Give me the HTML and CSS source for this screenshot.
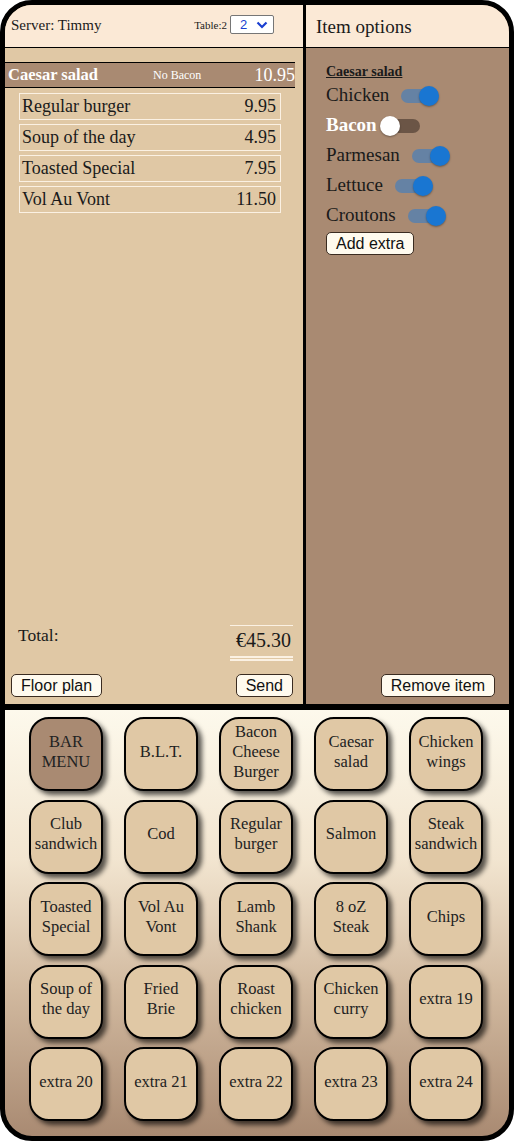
FILE: index.html
```html
<!DOCTYPE html>
<html>
  <head>
    <title>POS</title>
    <link rel="stylesheet" href="styles.css">
  </head>
  <body>
    <div class="pos">
      <div class="top">
        <div class="order-panel">
          <div class="panel-header">
            <span class="server">Server: Timmy</span>
            <span class="table-pick">
              Table:2
              <span class="table-select">2 <svg width="12" height="8" viewBox="0 0 12 8"><path d="M1.5 1.5 L6 6 L10.5 1.5" fill="none" stroke="#1a3fd1" stroke-width="2.2"/></svg></span>
            </span>
          </div>
          <div class="order-body">
            <div class="order-list">
              <div class="order-row selected">
                <span class="item-name">Caesar salad</span>
                <span class="item-note">No Bacon</span>
                <span class="item-price">10.95</span>
              </div>
              <div class="order-row">
                <span class="item-name">Regular burger</span>
                <span class="item-price">9.95</span>
              </div>
              <div class="order-row">
                <span class="item-name">Soup of the day</span>
                <span class="item-price">4.95</span>
              </div>
              <div class="order-row">
                <span class="item-name">Toasted Special</span>
                <span class="item-price">7.95</span>
              </div>
              <div class="order-row">
                <span class="item-name">Vol Au Vont</span>
                <span class="item-price">11.50</span>
              </div>
            </div>
            <div class="total">
              <span class="total-label">Total:</span>
              <span class="total-amount">€45.30</span>
            </div>
            <div class="actions">
              <button class="pos-button">Floor plan</button>
              <button class="pos-button">Send</button>
            </div>
          </div>
        </div>

        <div class="options-panel">
          <div class="panel-header">
            <span class="options-title">Item options</span>
          </div>
          <div class="options-body">
            <div class="options-list">
              <div class="options-item">Caesar salad</div>
              <div class="option">Chicken <span class="switch on"></span></div>
              <div class="option off">Bacon<span class="switch"></span></div>
              <div class="option">Parmesan <span class="switch on"></span></div>
              <div class="option">Lettuce <span class="switch on"></span></div>
              <div class="option">Croutons <span class="switch on"></span></div>
              <button class="pos-button">Add extra</button>
            </div>
            <div class="actions right">
              <button class="pos-button">Remove item</button>
            </div>
          </div>
        </div>
      </div>

      <div class="menu">
        <div class="menu-button bar">BAR<br>MENU</div>
        <div class="menu-button">B.L.T.</div>
        <div class="menu-button">Bacon Cheese Burger</div>
        <div class="menu-button">Caesar salad</div>
        <div class="menu-button">Chicken wings</div>
        <div class="menu-button">Club sandwich</div>
        <div class="menu-button">Cod</div>
        <div class="menu-button">Regular burger</div>
        <div class="menu-button">Salmon</div>
        <div class="menu-button">Steak sandwich</div>
        <div class="menu-button">Toasted Special</div>
        <div class="menu-button">Vol Au Vont</div>
        <div class="menu-button">Lamb Shank</div>
        <div class="menu-button">8 oZ Steak</div>
        <div class="menu-button">Chips</div>
        <div class="menu-button">Soup of the day</div>
        <div class="menu-button">Fried Brie</div>
        <div class="menu-button">Roast chicken</div>
        <div class="menu-button">Chicken curry</div>
        <div class="menu-button">extra 19</div>
        <div class="menu-button">extra 20</div>
        <div class="menu-button">extra 21</div>
        <div class="menu-button">extra 22</div>
        <div class="menu-button">extra 23</div>
        <div class="menu-button">extra 24</div>
      </div>
    </div>
  </body>
</html>
```

FILE: styles.css
```css
body {
  margin: 0;
  background-color: white;
  font-family: "Liberation Serif", "Times New Roman", serif;
  color: #1a1a1a;
}

.pos {
  box-sizing: border-box;
  width: 514px;
  height: 1141px;
  border: 5px solid black;
  border-radius: 32px;
  overflow: hidden;
  display: flex;
  flex-direction: column;
  background-color: black;
}

.top {
  display: flex;
  height: 699px;
  border-bottom: 6px solid black;
}

.order-panel {
  width: 298px;
  border-right: 3px solid black;
  display: flex;
  flex-direction: column;
  background-color: #e0c8a5;
}

.options-panel {
  flex: 1;
  display: flex;
  flex-direction: column;
  background-color: #a98a72;
}

.panel-header {
  box-sizing: border-box;
  height: 43px;
  border-bottom: 1px solid black;
  background-color: #fbe9d6;
  display: flex;
  align-items: center;
  justify-content: space-between;
  padding: 0 6px;
}

.server {
  font-size: 15px;
  margin-top: -1px;
}

.table-pick {
  font-size: 11px;
  display: flex;
  align-items: center;
  gap: 3px;
  margin-right: 23px;
  margin-top: -3px;
}

.table-select {
  box-sizing: border-box;
  width: 44px;
  height: 19px;
  border: 1px solid #767676;
  border-radius: 2px;
  background-color: white;
  color: #1a3fd1;
  font-family: "Liberation Sans", Arial, sans-serif;
  font-size: 13px;
  display: flex;
  align-items: center;
  justify-content: space-between;
  padding: 0 5px 0 9px;
}

.order-body {
  flex: 1;
  display: flex;
  flex-direction: column;
}

.order-list {
  flex: 1;
  padding-top: 14px;
  display: flex;
  flex-direction: column;
  gap: 4px;
}

.order-row {
  box-sizing: border-box;
  height: 27px;
  width: 262px;
  margin-left: 14px;
  border: 1px solid #fbf1e3;
  display: flex;
  align-items: center;
  justify-content: space-between;
  padding: 0 4px 0 2px;
  font-size: 18px;
}

.order-row.selected {
  width: 290px;
  height: 26px;
  margin-left: 0;
  margin-bottom: 1px;
  border: none;
  border-top: 1px solid black;
  border-bottom: 1px solid black;
  background-color: #a98a72;
  color: white;
  padding: 0 0 0 3px;
}

.selected .item-name {
  font-weight: bold;
  font-size: 16.5px;
  width: 130px;
}

.item-note {
  font-size: 12px;
  flex: 1;
  margin-left: 15px;
}

.total {
  display: flex;
  justify-content: space-between;
  align-items: flex-start;
  padding: 0 10px 0 13px;
}

.total-label {
  font-size: 17.5px;
  margin-top: 0;
}

.total-amount {
  font-size: 20px;
  border-top: 1px solid #fbf1e3;
  border-bottom: 5px double #fbf1e3;
  padding: 3px 2px 4px 2px;
  width: 59px;
  text-align: right;
}

.actions {
  display: flex;
  justify-content: space-between;
  padding: 13px 10px 7px 6px;
}

.actions.right {
  justify-content: flex-end;
  padding-right: 14px;
}

.pos-button {
  height: 23px;
  font-family: "Liberation Sans", Arial, sans-serif;
  font-size: 16px;
  color: #111;
  background-color: #fffaee;
  border: 1px solid #3a2b20;
  border-radius: 5px;
  padding: 0 9px;
  cursor: pointer;
}

.options-title {
  font-size: 19px;
  padding-left: 4px;
  margin-top: 1px;
}

.options-body {
  flex: 1;
  display: flex;
  flex-direction: column;
}

.options-list {
  flex: 1;
  padding: 16px 0 0 20px;
  display: flex;
  flex-direction: column;
  align-items: flex-start;
}

.options-item {
  font-size: 14px;
  font-weight: bold;
  text-decoration: underline;
  margin-bottom: 0;
}

.option {
  font-size: 19px;
  height: 30px;
  display: flex;
  align-items: center;
  gap: 5px;
}

.option.off {
  color: white;
  font-weight: bold;
  gap: 2px;
}

.switch {
  position: relative;
  width: 34px;
  height: 14px;
  border-radius: 7px;
  background-color: #6b5546;
  margin-left: 7px;
  margin-top: 2px;
}

.switch::after {
  content: "";
  position: absolute;
  top: -3px;
  left: -6px;
  width: 20px;
  height: 20px;
  border-radius: 50%;
  background-color: white;
  box-shadow: 0 1px 2px rgba(0, 0, 0, 0.35);
}

.switch.on {
  background-color: #6582a4;
}

.switch.on::after {
  left: auto;
  right: -4px;
  background-color: #1976d2;
}

.options-list .pos-button {
  margin-top: 2px;
}

.menu {
  flex: 1;
  background: linear-gradient(to bottom, #fdf9ec, #f2e5d0 35%, #d2baa0 65%, #a98a72);
  display: grid;
  grid-template-columns: repeat(5, 74px);
  grid-auto-rows: 74px;
  column-gap: 21px;
  row-gap: 8.5px;
  padding: 7px 0 0 24px;
}

.menu-button {
  box-sizing: border-box;
  border: 2px solid black;
  border-radius: 20px;
  background-color: #e0c8a5;
  box-shadow: 4px 4px 5px rgba(0, 0, 0, 0.65);
  display: flex;
  align-items: center;
  justify-content: center;
  text-align: center;
  font-size: 16.5px;
  line-height: 20px;
  padding: 0 3px 5px 3px;
  color: #222;
  cursor: pointer;
}

.menu-button.bar {
  background-color: #a98a72;
}
```
